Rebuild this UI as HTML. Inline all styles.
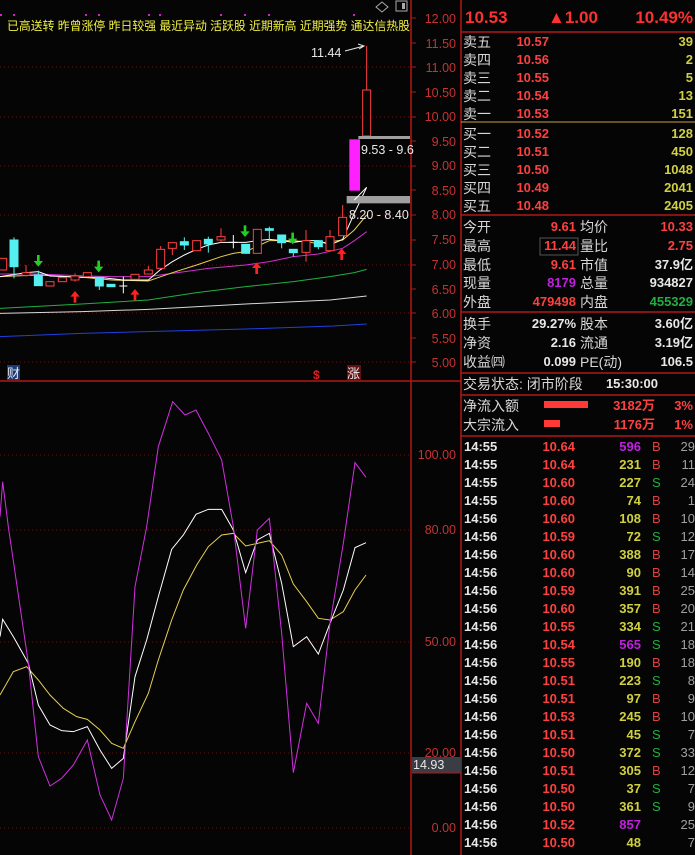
<!DOCTYPE html>
<html><head><meta charset="utf-8"><style>
html,body{margin:0;padding:0;background:#000;width:695px;height:855px;overflow:hidden}
svg{display:block}
text{font-family:"Liberation Sans","Noto Sans CJK SC",sans-serif}
.cn{font-family:"Noto Sans CJK SC","WenQuanYi Zen Hei",sans-serif;font-size:14px;fill:#d8d8d8}
.n{font-size:13px;font-weight:bold}
.ax{font-size:12.5px;fill:#c83232}
</style></head><body>
<svg width="695" height="855" viewBox="0 0 695 855" xmlns="http://www.w3.org/2000/svg">
<rect width="695" height="855" fill="#050505"/>
<g stroke="#6a1010" stroke-dasharray="1,3" stroke-width="1">
<line x1="0" y1="67" x2="410" y2="67"/><line x1="0" y1="117" x2="410" y2="117"/><line x1="0" y1="166" x2="410" y2="166"/><line x1="0" y1="215" x2="410" y2="215"/><line x1="0" y1="265" x2="410" y2="265"/><line x1="0" y1="313" x2="410" y2="313"/><line x1="0" y1="362" x2="410" y2="362"/>
<line x1="0" y1="455" x2="410" y2="455"/><line x1="0" y1="530" x2="410" y2="530"/><line x1="0" y1="642" x2="410" y2="642"/><line x1="0" y1="753" x2="410" y2="753"/><line x1="0" y1="828" x2="410" y2="828"/>
</g>
<g stroke="#b01818" stroke-width="1.5">
<line x1="411" y1="0" x2="411" y2="855"/>
<line x1="461" y1="0" x2="461" y2="855"/>
<line x1="0" y1="381" x2="461" y2="381"/>
</g>
<g stroke="#b01818" stroke-width="1">
<line x1="411" y1="18" x2="416" y2="18"/><line x1="411" y1="43" x2="416" y2="43"/><line x1="411" y1="67" x2="416" y2="67"/><line x1="411" y1="92" x2="416" y2="92"/><line x1="411" y1="117" x2="416" y2="117"/><line x1="411" y1="141" x2="416" y2="141"/><line x1="411" y1="166" x2="416" y2="166"/><line x1="411" y1="190" x2="416" y2="190"/><line x1="411" y1="215" x2="416" y2="215"/><line x1="411" y1="240" x2="416" y2="240"/><line x1="411" y1="265" x2="416" y2="265"/><line x1="411" y1="289" x2="416" y2="289"/><line x1="411" y1="313" x2="416" y2="313"/><line x1="411" y1="338" x2="416" y2="338"/><line x1="411" y1="362" x2="416" y2="362"/>
</g>
<g class="ax" text-anchor="end">
<text x="456" y="23">12.00</text><text x="456" y="48">11.50</text><text x="456" y="72">11.00</text><text x="456" y="97">10.50</text><text x="456" y="121">10.00</text><text x="456" y="146">9.50</text><text x="456" y="170">9.00</text><text x="456" y="195">8.50</text><text x="456" y="219">8.00</text><text x="456" y="244">7.50</text><text x="456" y="269">7.00</text><text x="456" y="294">6.50</text><text x="456" y="318">6.00</text><text x="456" y="343">5.50</text><text x="456" y="367">5.00</text>
<text x="456" y="459">100.00</text><text x="456" y="534">80.00</text><text x="456" y="646">50.00</text><text x="456" y="757">20.00</text><text x="456" y="832">0.00</text>
</g>
<rect x="412" y="757" width="49" height="16" fill="#3a3d44"/>
<line x1="412" y1="773" x2="461" y2="773" stroke="#b01818"/>
<text x="413" y="769" font-size="12.5" fill="#e8e8e8">14.93</text>

<path d="M382 2 L388 7 L382 12 L376 7 Z" fill="none" stroke="#aaa"/>
<rect x="396" y="1" width="11" height="10" fill="none" stroke="#aaa"/><rect x="402" y="3" width="3" height="6" fill="#aaa"/>
<g fill="#d020d0"><rect x="0" y="14" width="2" height="2"/><rect x="13" y="14" width="2" height="2"/><rect x="85" y="14" width="2" height="2"/><rect x="98" y="14" width="2" height="2"/><rect x="148" y="14" width="2" height="2"/><rect x="159" y="14" width="2" height="2"/><rect x="220" y="14" width="2" height="2"/><rect x="244" y="14" width="2" height="2"/><rect x="268" y="14" width="2" height="2"/><rect x="353" y="14" width="2" height="2"/></g>
<text x="7" y="30" font-size="12" fill="#f0f040" font-family="Noto Sans CJK SC,sans-serif" textLength="403" lengthAdjust="spacingAndGlyphs">已高送转 昨曾涨停 昨日较强 最近异动 活跃股 近期新高 近期强势 通达信热股</text>

<g transform="scale(0.333333)" stroke-width="3" fill="none">
<polyline stroke="#2040e0" points="0,1010 245,1000 737,987 1000,978 1100,972"/>
<polyline stroke="#d8d8d8" points="0,940 245,935 445,928 737,912 990,900 1100,888"/>
<polyline stroke="#20b040" points="0,925 245,912 445,900 590,878 737,860 880,845 990,830 1063,818 1100,808"/>
<polyline stroke="#d030d0" points="0,822 115,822 260,828 335,830 445,830 517,820 625,805 737,795 808,785 880,770 955,762 1028,745 1063,722 1100,695"/>
<polyline stroke="#e8d050" points="0,830 115,825 260,833 335,840 445,843 517,818 590,795 663,770 700,760 737,755 808,722 880,722 955,730 1028,720 1063,690 1100,645"/>
<polyline stroke="#ffffff" points="0,830 80,818 115,815 150,828 260,832 300,832 370,840 445,840 480,810 517,785 553,765 590,748 625,735 663,727 700,727 737,727 772,722 808,718 845,722 880,727 918,722 955,722 990,735 1028,718 1063,640 1100,562"/>
<g stroke="#ff4040" fill="#050505">
<rect x="-4" y="775" width="24" height="35"/>
<line x1="78" y1="795" x2="78" y2="830"/><rect x="66" y="818" width="24" height="8"/>
<rect x="138" y="845" width="24" height="13"/>
<rect x="175" y="833" width="24" height="12"/>
<line x1="225" y1="820" x2="225" y2="845"/><rect x="213" y="828" width="24" height="12"/>
<rect x="250" y="818" width="24" height="12"/>
<rect x="393" y="823" width="24" height="15"/>
<line x1="445" y1="798" x2="445" y2="822"/><rect x="433" y="810" width="24" height="12"/>
<line x1="482" y1="738" x2="482" y2="805"/><rect x="470" y="748" width="24" height="57"/>
<line x1="517" y1="745" x2="517" y2="765"/><rect x="505" y="728" width="24" height="17"/>
<rect x="578" y="722" width="24" height="30"/>
<line x1="663" y1="685" x2="663" y2="728"/><rect x="651" y="710" width="24" height="10"/>
<rect x="760" y="688" width="24" height="72"/>
<line x1="918" y1="690" x2="918" y2="785"/><rect x="906" y="722" width="24" height="35"/>
<line x1="990" y1="690" x2="990" y2="752"/><rect x="978" y="710" width="24" height="42"/>
<line x1="1028" y1="615" x2="1028" y2="652"/><rect x="1016" y="652" width="24" height="55"/>
<line x1="1100" y1="138" x2="1100" y2="270"/><rect x="1088" y="270" width="24" height="138"/>
</g>
<g stroke="#54f0f0" fill="#54f0f0">
<line x1="42" y1="712" x2="42" y2="835"/><rect x="30" y="720" width="24" height="80"/>
<line x1="115" y1="812" x2="115" y2="857"/><rect x="103" y="825" width="24" height="32"/>
<line x1="298" y1="832" x2="298" y2="870"/><rect x="286" y="832" width="24" height="26"/>
<rect x="321" y="853" width="24" height="7"/>
<line x1="553" y1="712" x2="553" y2="750"/><rect x="541" y="725" width="24" height="10"/>
<line x1="625" y1="710" x2="625" y2="758"/><rect x="613" y="718" width="24" height="14"/>
<rect x="725" y="733" width="24" height="27"/>
<line x1="808" y1="680" x2="808" y2="720"/><rect x="796" y="686" width="24" height="5"/>
<line x1="845" y1="705" x2="845" y2="745"/><rect x="833" y="705" width="24" height="23"/>
<line x1="880" y1="748" x2="880" y2="770"/><rect x="868" y="748" width="24" height="10"/>
<line x1="955" y1="722" x2="955" y2="748"/><rect x="943" y="722" width="24" height="18"/>
</g>
<g stroke="#fff"><line x1="370" y1="830" x2="370" y2="880"/><line x1="358" y1="858" x2="382" y2="858"/><line x1="700" y1="705" x2="700" y2="745"/><line x1="688" y1="727" x2="712" y2="727"/></g>
<rect x="1048" y="418" width="32" height="154" fill="#ff20ff" stroke="none"/>
<rect x="1075" y="408" width="155" height="9" fill="#a0a0a0" stroke="none"/>
<rect x="1040" y="588" width="190" height="22" fill="#a0a0a0" stroke="none"/>
<line x1="1063" y1="600" x2="1100" y2="562" stroke="#fff"/>
<g fill="#20d020" stroke="none">
<path d="M111 765h8v18h10l-14 17-14-17h10z"/><path d="M292 782h8v18h10l-14 17-14-17h10z"/><path d="M731 676h8v18h10l-14 17-14-17h10z"/><path d="M874 698h8v18h10l-14 17-14-17h10z"/>
</g>
<g fill="#ff2020" stroke="none">
<path d="M221 908h8v-18h10l-14-17-14 17h10z"/><path d="M401 902h8v-18h10l-14-17-14 17h10z"/><path d="M766 822h8v-18h10l-14-17-14 17h10z"/><path d="M1021 780h8v-18h10l-14-17-14 17h10z"/>
</g>
</g>
<text x="311" y="57" font-size="12.5" fill="#e8e8e8">11.44</text>
<path d="M345 51 L364 46 M358 44 L364 46 L359 49" stroke="#e8e8e8" fill="none"/>
<text x="361" y="154" font-size="12.5" fill="#e8e8e8">9.53 - 9.6</text>
<text x="349" y="219" font-size="12.5" fill="#e8e8e8">8.20 - 8.40</text>
<rect x="7" y="365" width="13" height="15" fill="#1a3a70"/>
<text x="7" y="378" font-size="13" fill="#e8e8f8" font-family="Noto Sans CJK SC,sans-serif">财</text>
<text x="313" y="379" font-size="12" fill="#e02020" font-weight="bold">$</text>
<rect x="347" y="365" width="14" height="15" fill="#601010"/>
<text x="347" y="378" font-size="13" fill="#f0f0f0" font-family="Noto Sans CJK SC,sans-serif">涨</text>

<g transform="translate(0,380) scale(0.333333)" stroke-width="3" fill="none">
<polyline stroke="#e8d050" points="0,945 40,875 80,860 115,900 150,945 190,985 230,1010 262,1018 300,1050 335,1090 370,1105 405,1025 445,940 475,840 515,720 550,630 590,555 625,500 665,465 700,460 737,498 772,490 808,482 845,525 880,612 920,665 955,715 990,720 1030,695 1065,630 1098,585"/>
<polyline stroke="#ffffff" points="0,770 8,718 40,770 85,850 115,975 150,1035 185,1052 220,1055 262,1040 300,1110 335,1165 370,1135 405,890 440,780 475,650 515,508 550,465 588,403 625,388 665,388 700,450 737,578 772,480 808,460 845,610 880,800 920,770 955,822 990,730 1030,630 1065,503 1098,488"/>
<polyline stroke="#d030e0" points="0,410 8,305 25,440 85,850 115,1130 150,1218 185,1195 220,1155 262,1080 300,1245 335,1320 370,1195 405,620 440,440 475,200 518,65 555,105 588,90 625,160 665,240 700,440 737,745 772,450 808,415 845,760 880,1178 920,970 955,1030 990,730 1030,490 1065,248 1098,292"/>
</g>

<g stroke="#b01818" stroke-width="1.5">
<line x1="461" y1="32" x2="695" y2="32"/>
<line x1="461" y1="215" x2="695" y2="215"/>
<line x1="461" y1="312" x2="695" y2="312"/>
<line x1="461" y1="373" x2="695" y2="373"/>
<line x1="461" y1="395" x2="695" y2="395"/>
<line x1="461" y1="436" x2="695" y2="436"/>
</g>
<line x1="461" y1="122" x2="695" y2="122" stroke="#c8a040" stroke-width="1"/>
<g font-weight="bold" font-size="17" fill="#ff3030">
<text x="465" y="23">10.53</text><text x="548" y="23">▲1.00</text><text x="693" y="23" text-anchor="end">10.49%</text>
</g>
<g class="cn">
<text x="463" y="47">卖五</text><text x="463" y="65">卖四</text><text x="463" y="83">卖三</text><text x="463" y="101">卖二</text><text x="463" y="119">卖一</text>
<text x="463" y="139">买一</text><text x="463" y="157">买二</text><text x="463" y="175">买三</text><text x="463" y="193">买四</text><text x="463" y="211">买五</text>
<text x="463" y="232">今开</text><text x="463" y="251">最高</text><text x="463" y="270">最低</text><text x="463" y="288">现量</text><text x="463" y="307">外盘</text>
<text x="580" y="232">均价</text><text x="580" y="251">量比</text><text x="580" y="270">市值</text><text x="580" y="288">总量</text><text x="580" y="307">内盘</text>
<text x="463" y="329">换手</text><text x="463" y="348">净资</text><text x="463" y="367">收益㈣</text>
<text x="580" y="329">股本</text><text x="580" y="348">流通</text><text x="580" y="367">PE(动)</text>
<text x="463" y="389">交易状态: 闭市阶段</text>
<text x="463" y="411">净流入额</text><text x="463" y="430">大宗流入</text>
</g>
<g class="n" fill="#ff4040" text-anchor="end">
<text x="549" y="46">10.57</text><text x="549" y="64">10.56</text><text x="549" y="82">10.55</text><text x="549" y="100">10.54</text><text x="549" y="118">10.53</text>
<text x="549" y="138">10.52</text><text x="549" y="156">10.51</text><text x="549" y="174">10.50</text><text x="549" y="192">10.49</text><text x="549" y="210">10.48</text>
<text x="576" y="231">9.61</text><text x="576" y="250">11.44</text><text x="576" y="269">9.61</text><text x="576" y="306">479498</text>
<text x="693" y="231">10.33</text><text x="693" y="250">2.75</text>
</g>
<rect x="540" y="238" width="38" height="17" fill="none" stroke="#555"/>
<g class="n" fill="#d0d040" text-anchor="end">
<text x="693" y="46">39</text><text x="693" y="64">2</text><text x="693" y="82">5</text><text x="693" y="100">13</text><text x="693" y="118">151</text>
<text x="693" y="138">128</text><text x="693" y="156">450</text><text x="693" y="174">1048</text><text x="693" y="192">2041</text><text x="693" y="210">2405</text>
</g>
<g class="n" fill="#e8e8e8" text-anchor="end">
<text x="693" y="269">37.9亿</text><text x="693" y="287">934827</text>
<text x="576" y="328">29.27%</text><text x="576" y="347">2.16</text><text x="576" y="366">0.099</text>
<text x="693" y="328">3.60亿</text><text x="693" y="347">3.19亿</text><text x="693" y="366">106.5</text>
<text x="658" y="388">15:30:00</text>
</g>
<text x="576" y="287" class="n" fill="#c020e0" text-anchor="end">8179</text>
<text x="693" y="306" class="n" fill="#20b040" text-anchor="end">455329</text>
<rect x="544" y="401" width="44" height="7" fill="#ff3838"/>
<rect x="544" y="420" width="16" height="7" fill="#ff3838"/>
<g class="n" fill="#ff4040" text-anchor="end">
<text x="655" y="410">3182万</text><text x="693" y="410">3%</text>
<text x="655" y="429">1176万</text><text x="693" y="429">1%</text>
</g>

<g class="n">
<g fill="#e8e8e8">
<text x="464" y="451">14:55</text><text x="464" y="469">14:55</text><text x="464" y="487">14:55</text><text x="464" y="505">14:55</text><text x="464" y="523">14:56</text><text x="464" y="541">14:56</text><text x="464" y="559">14:56</text><text x="464" y="577">14:56</text><text x="464" y="595">14:56</text><text x="464" y="613">14:56</text><text x="464" y="631">14:56</text><text x="464" y="649">14:56</text><text x="464" y="667">14:56</text><text x="464" y="685">14:56</text><text x="464" y="703">14:56</text><text x="464" y="721">14:56</text><text x="464" y="739">14:56</text><text x="464" y="757">14:56</text><text x="464" y="775">14:56</text><text x="464" y="793">14:56</text><text x="464" y="811">14:56</text><text x="464" y="829">14:56</text><text x="464" y="847">14:56</text>
</g>
<g fill="#ff4040" text-anchor="end">
<text x="575" y="451">10.64</text><text x="575" y="469">10.64</text><text x="575" y="487">10.60</text><text x="575" y="505">10.60</text><text x="575" y="523">10.60</text><text x="575" y="541">10.59</text><text x="575" y="559">10.60</text><text x="575" y="577">10.60</text><text x="575" y="595">10.59</text><text x="575" y="613">10.60</text><text x="575" y="631">10.55</text><text x="575" y="649">10.54</text><text x="575" y="667">10.55</text><text x="575" y="685">10.51</text><text x="575" y="703">10.51</text><text x="575" y="721">10.53</text><text x="575" y="739">10.51</text><text x="575" y="757">10.50</text><text x="575" y="775">10.51</text><text x="575" y="793">10.50</text><text x="575" y="811">10.50</text><text x="575" y="829">10.52</text><text x="575" y="847">10.50</text>
</g>
<g fill="#d0d040" text-anchor="end">
<text x="641" y="451" fill="#c020e0">596</text><text x="641" y="469">231</text><text x="641" y="487">227</text><text x="641" y="505">74</text><text x="641" y="523">108</text><text x="641" y="541">72</text><text x="641" y="559">388</text><text x="641" y="577">90</text><text x="641" y="595">391</text><text x="641" y="613">357</text><text x="641" y="631">334</text><text x="641" y="649" fill="#c020e0">565</text><text x="641" y="667">190</text><text x="641" y="685">223</text><text x="641" y="703">97</text><text x="641" y="721">245</text><text x="641" y="739">45</text><text x="641" y="757">372</text><text x="641" y="775">305</text><text x="641" y="793">37</text><text x="641" y="811">361</text><text x="641" y="829" fill="#c020e0">857</text><text x="641" y="847">48</text>
</g>
<g font-weight="normal">
<text x="652" y="451" fill="#e04040">B</text><text x="652" y="469" fill="#e04040">B</text><text x="652" y="487" fill="#20b040">S</text><text x="652" y="505" fill="#e04040">B</text><text x="652" y="523" fill="#e04040">B</text><text x="652" y="541" fill="#20b040">S</text><text x="652" y="559" fill="#e04040">B</text><text x="652" y="577" fill="#e04040">B</text><text x="652" y="595" fill="#e04040">B</text><text x="652" y="613" fill="#e04040">B</text><text x="652" y="631" fill="#20b040">S</text><text x="652" y="649" fill="#20b040">S</text><text x="652" y="667" fill="#e04040">B</text><text x="652" y="685" fill="#20b040">S</text><text x="652" y="703" fill="#e04040">B</text><text x="652" y="721" fill="#e04040">B</text><text x="652" y="739" fill="#20b040">S</text><text x="652" y="757" fill="#20b040">S</text><text x="652" y="775" fill="#e04040">B</text><text x="652" y="793" fill="#20b040">S</text><text x="652" y="811" fill="#20b040">S</text>
</g>
<g fill="#a0a0a0" font-weight="normal" text-anchor="end">
<text x="695" y="451">29</text><text x="695" y="469">11</text><text x="695" y="487">24</text><text x="695" y="505">1</text><text x="695" y="523">10</text><text x="695" y="541">12</text><text x="695" y="559">17</text><text x="695" y="577">14</text><text x="695" y="595">25</text><text x="695" y="613">20</text><text x="695" y="631">21</text><text x="695" y="649">18</text><text x="695" y="667">18</text><text x="695" y="685">8</text><text x="695" y="703">9</text><text x="695" y="721">10</text><text x="695" y="739">7</text><text x="695" y="757">33</text><text x="695" y="775">12</text><text x="695" y="793">7</text><text x="695" y="811">9</text><text x="695" y="829">25</text><text x="695" y="847">7</text>
</g>
</g>
</svg>
</body></html>
